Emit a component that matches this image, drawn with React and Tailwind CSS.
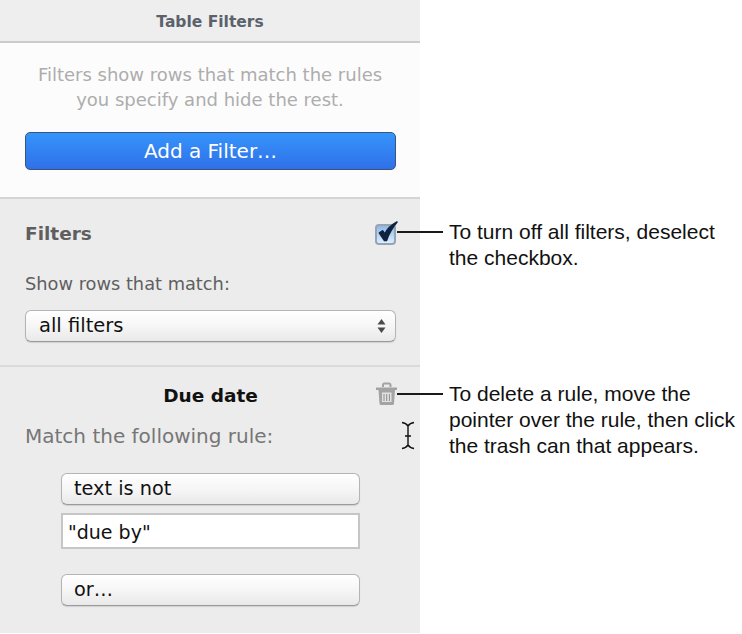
const ui = { fontFamily: '"DejaVu Sans", sans-serif' };

function Checkbox() {
  return (
    <div className="relative w-[21px] h-[21px] shrink-0">
      <div className="absolute left-0 top-0 w-[21px] h-[21px] rounded-[4px] border-2 border-[#9aa3b2] bg-gradient-to-b from-[#8fb9ea] to-[#d8efff]" />
      <svg className="absolute left-[2px] top-[-4px]" width="21" height="24" viewBox="0 0 21 24">
        <path d="M2.500 13 L7.500 20.500 L9.500 20.500 Q 12.500 11 20 2 Q 11 7 7.800 14 L5.500 10.800 Z" fill="#10223f" stroke="#10223f" strokeWidth="1.600" strokeLinejoin="round" />
      </svg>
    </div>
  );
}

function Trash() {
  return (
    <svg width="23" height="24" viewBox="0 0 23 24">
      <path d="M8 5 V3 Q8 1.500 9.500 1.500 H14 Q15.500 1.500 15.500 3 V5" fill="none" stroke="#a3a3a3" strokeWidth="2" />
      <path d="M1 5.500 H22 V8 H1 Z" fill="#a3a3a3" />
      <path d="M3.500 8 H20 L19 21.500 Q19 23 17.500 23 H6 Q4.500 23 4.500 21.500 Z" fill="#a3a3a3" />
      <rect x="7" y="10.500" width="9.500" height="9.500" fill="#e2e2e2" />
      <path d="M9 12 V19 M11.700 12 V19 M14.400 12 V19" stroke="#8c8c8c" strokeWidth="1" />
    </svg>
  );
}

function Pill({ children, className = "" }) {
  return (
    <div className={"flex items-center rounded-[6px] border border-[#b4b4b4] border-b-[#9a9a9a] shadow-[0_1px_1px_rgba(0,0,0,0.12)] bg-gradient-to-b from-[#ffffff] via-[#f6f6f6] to-[#e9e9e9] text-[#111] " + className}>
      {children}
    </div>
  );
}

function Callout({ top, lineW, left, lines }) {
  return (
    <div className="absolute flex items-start" style={{ top, left }}>
      <div className="h-[2px] bg-[#1a1a1a] mt-[12px]" style={{ width: lineW }} />
      <div className="ml-[6px] text-[21px] leading-[26px] text-[#111] whitespace-nowrap" style={{ fontFamily: '"Liberation Sans", sans-serif' }}>
        {lines.map((l) => <div key={l}>{l}</div>)}
      </div>
    </div>
  );
}

export default function App() {
  return (
    <div className="relative w-[742px] h-[634px] bg-white overflow-hidden">
      <div className="w-[420px] h-[633px] flex flex-col bg-[#ececec]" style={ui}>
        <div className="h-[43px] shrink-0 flex items-center justify-center border-b-2 border-[#c9cccf] bg-[#eeeeee] text-[15.500px] font-bold text-[#5b626b] pt-[4px]">
          Table Filters
        </div>

        <div className="h-[156px] shrink-0 flex flex-col items-center bg-[#fcfcfc] border-b-2 border-[#d4d4d4] px-[25px] pt-[19px]">
          <div className="text-[18px] leading-[25px] text-[#adadad] text-center whitespace-nowrap">
            <div>Filters show rows that match the rules</div>
            <div>you specify and hide the rest.</div>
          </div>
          <div className="mt-[20px] w-[371px] h-[38px] self-start flex items-center justify-center rounded-[5px] border border-[#37557f] bg-gradient-to-b from-[#3694fb] to-[#2f70e8] text-white text-[20px]">
            Add a Filter…
          </div>
        </div>

        <div className="h-[168px] shrink-0 flex flex-col border-b-2 border-[#dadada] pl-[25px] pr-[24px] pt-[23px]">
          <div className="flex items-center justify-between h-[24px]">
            <div className="text-[18.500px] font-bold text-[#5f5f5f]">Filters</div>
            <Checkbox />
          </div>
          <div className="mt-[26px] text-[17.800px] leading-[24px] text-[#5f5f5f]">Show rows that match:</div>
          <div className="mt-[14px]">
            <Pill className="w-[371px] h-[32px] pl-[13px] pr-[9px] justify-between text-[19.500px]">
              <span>all filters</span>
              <svg width="9" height="16" viewBox="0 0 9 16">
                <path d="M4.500 1 L8.500 6.500 H0.500 Z M4.500 15 L0.500 9.500 H8.500 Z" fill="#4a4a4a" />
              </svg>
            </Pill>
          </div>
        </div>

        <div className="flex-1 flex flex-col pl-[25px] pr-[22px] pt-[16px]">
          <div className="flex items-center h-[26px] relative">
            <div className="w-full text-center text-[18.500px] font-bold text-[#111] pr-[2px]">Due date</div>
            <div className="absolute right-0 top-[-1px]"><Trash /></div>
          </div>
          <div className="mt-[14px] text-[20px] leading-[26px] text-[#767676]">Match the following rule:</div>
          <div className="mt-[24px] ml-[36px] w-[299px] flex flex-col">
            <Pill className="h-[32px] pl-[12px] pt-[1px] text-[19.300px]">text is not</Pill>
            <div className="mt-[8px] h-[36px] flex items-center pl-[5px] pt-[3px] border-2 border-[#c6c6c6] bg-white text-[19px] text-[#111]">"due by"</div>
            <Pill className="mt-[25px] h-[32px] pl-[12px] text-[19.300px]">or…</Pill>
          </div>
        </div>
      </div>

      <div className="absolute left-[401px] top-[421px]">
        <svg width="14" height="29" viewBox="0 0 14 29">
          <path d="M1 1.500 Q5 2 7 5 Q9 2 13 1.500 M7 5 V24 M1 27.500 Q5 27 7 24 Q9 27 13 27.500 M4 15 H10" fill="none" stroke="#111" strokeWidth="1.400" />
        </svg>
      </div>

      <Callout top={219} left={397} lineW={46} lines={["To turn off all filters, deselect", "the checkbox."]} />
      <Callout top={381} left={397} lineW={46} lines={["To delete a rule, move the", "pointer over the rule, then click", "the trash can that appears."]} />
    </div>
  );
}
